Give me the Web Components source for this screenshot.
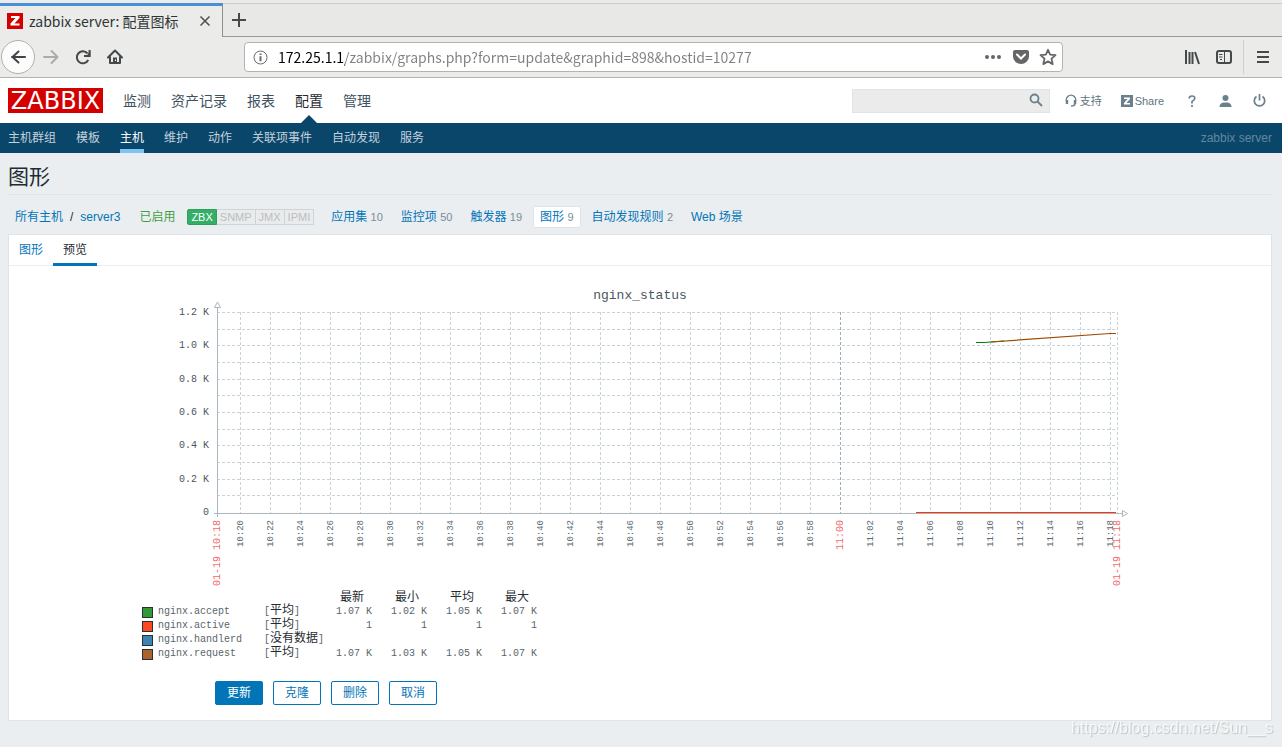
<!DOCTYPE html>
<html lang="zh-CN">
<head>
<meta charset="utf-8">
<title>zabbix server: 配置图标</title>
<style>
  html, body { margin: 0; min-height: 100vh; }
  body {
    background: #ebeef0;
    color: #1f2c33;
    font: 12px/16px "Liberation Sans", "Noto Sans CJK SC", sans-serif;
    display: flex;
    flex-direction: column;
  }
</style>
</head>
<body>
<browser-tabs label="zabbix server: 配置图标"></browser-tabs>
<browser-toolbar address="172.25.1.1/zabbix/graphs.php?form=update&amp;graphid=898&amp;hostid=10277"></browser-toolbar>
<zbx-header>
  <zbx-menu-link>监测</zbx-menu-link>
  <zbx-menu-link>资产记录</zbx-menu-link>
  <zbx-menu-link>报表</zbx-menu-link>
  <zbx-menu-link active>配置</zbx-menu-link>
  <zbx-menu-link>管理</zbx-menu-link>
</zbx-header>
<zbx-subnav server="zabbix server">
  <zbx-sub-link>主机群组</zbx-sub-link>
  <zbx-sub-link>模板</zbx-sub-link>
  <zbx-sub-link active>主机</zbx-sub-link>
  <zbx-sub-link>维护</zbx-sub-link>
  <zbx-sub-link>动作</zbx-sub-link>
  <zbx-sub-link>关联项事件</zbx-sub-link>
  <zbx-sub-link>自动发现</zbx-sub-link>
  <zbx-sub-link>服务</zbx-sub-link>
</zbx-subnav>
<zbx-page heading="图形">
  <zbx-host-nav slot="nav">
    <zbx-host-link count="10">应用集</zbx-host-link>
    <zbx-host-link count="50">监控项</zbx-host-link>
    <zbx-host-link count="19">触发器</zbx-host-link>
    <zbx-host-link count="9" active>图形</zbx-host-link>
    <zbx-host-link count="2">自动发现规则</zbx-host-link>
    <zbx-host-link>Web 场景</zbx-host-link>
  </zbx-host-nav>
  <zbx-panel>
    <zbx-tab slot="tabs">图形</zbx-tab>
    <zbx-tab slot="tabs" active>预览</zbx-tab>
    <zbx-graph></zbx-graph>
    <zbx-button slot="actions" primary>更新</zbx-button>
    <zbx-button slot="actions">克隆</zbx-button>
    <zbx-button slot="actions">删除</zbx-button>
    <zbx-button slot="actions">取消</zbx-button>
  </zbx-panel>
</zbx-page>
<page-watermark>https://blog.csdn.net/Sun__s</page-watermark>

<script>
const define = (name, render) => customElements.define(name, class extends HTMLElement {
  connectedCallback() {
    if (this.shadowRoot) return;
    this.attachShadow({ mode: "open" }).innerHTML =
      "<style>*{box-sizing:border-box}a{color:inherit;text-decoration:none}button{font:inherit;margin:0;padding:0;border:0;background:none;color:inherit}svg{display:block}</style>" + render(this);
  }
});
const esc = s => s.replace(/&/g, "&amp;").replace(/"/g, "&quot;");

define("browser-tabs", el => `
<style>
  :host { display: flex; height: 37px; box-sizing: border-box; background: #e8e8e7; border-top: 3px solid #ebebea; color: #2e3436;
    font: 14px/20px "Noto Sans CJK SC", sans-serif; }
  .tab { width: 223px; display: flex; align-items: center; background: #ebebe9; border-top: 3px solid #4a90d9; border-right: 1px solid #8e8e8b; padding: 0 10px 2px 7px; }
  .tab span { flex: 1; padding-left: 6px; white-space: nowrap; }
  .rest { flex: 1; border-top: 1px solid #cdcdcb; border-bottom: 1px solid #999996; padding: 8px; }
</style>
<div class="tab">
  <svg width="16" height="16"><rect width="16" height="16" fill="#d40000"/><path d="M4 3h8.500v2L7.500 10.500h5v2H3.500v-2l5-5.500H4z" fill="#fff"/></svg>
  <span>${el.getAttribute("label")}</span>
  <button aria-label="关闭"><svg width="14" height="14"><path d="M2.500 2.500l9 9M11.500 2.500l-9 9" stroke="#4a4f51" stroke-width="1.500"/></svg></button>
</div>
<div class="rest"><button aria-label="新标签页"><svg width="16" height="16"><path d="M8 1v14M1 8h14" stroke="#46494a" stroke-width="2"/></svg></button></div>`);

define("browser-toolbar", el => `
<style>
  :host { display: flex; align-items: center; height: 41px; box-sizing: border-box; background: #ebebe9; border-bottom: 1px solid #b3b3af; padding: 0 13px 0 1px; }
  .nav { display: flex; align-items: center; flex: none; width: 243px; }
  .nav .back { width: 34px; height: 34px; border: 1px solid #b0b0ac; border-radius: 17px; background: #fcfcfc; padding: 8px; margin-right: 8px; }
  .nav .gap + .gap { margin-left: 16px; }
  .url { flex: 1; max-width: 819px; height: 30px; display: flex; align-items: center; gap: 10px; background: #fff; border: 1px solid #b3b3af; border-radius: 4px; padding: 0 5px 0 8px; }
  .url .more { margin-right: 2px; }
  input { flex: 1; min-width: 0; border: 0; padding: 0; outline: 0; height: 26px; font: 14px/26px "Noto Sans CJK SC", sans-serif;
    color: transparent; background: linear-gradient(90deg, #000 67px, #808080 67px); -webkit-background-clip: text; background-clip: text; }
  .end { margin-left: auto; display: flex; align-items: center; gap: 16px; }
  .menu { border-left: 1px solid #cfcfcc; height: 34px; padding-left: 13px; margin-left: -5px; }
</style>
<div class="nav">
  <button class="back" aria-label="后退"><svg width="16" height="16"><path d="M2 8h13M8.500 2.500L2.500 8l6 5.500" fill="none" stroke="#3e4345" stroke-width="2" stroke-linecap="round" stroke-linejoin="round"/></svg></button>
  <button class="gap" aria-label="前进"><svg width="16" height="16"><path d="M1 8h13M8.500 2l6 6-6 6" fill="none" stroke="#acacaa" stroke-width="2" stroke-linecap="round" stroke-linejoin="round"/></svg></button>
  <button class="gap" aria-label="刷新"><svg width="16" height="16"><path d="M13.200 11A6 6 0 1 1 12.500 4.500" fill="none" stroke="#46494a" stroke-width="2"/><path d="M15.500 1v7H9V6.500h3z" fill="#46494a"/><path d="M14.500 1v6H9" fill="none" stroke="#46494a" stroke-width="1.800"/></svg></button>
  <button class="gap" aria-label="主页"><svg width="16" height="16"><path d="M1 8.500L8 1.500l7 7M3 7.500V14h10V7.500" fill="none" stroke="#46494a" stroke-width="2" stroke-linecap="round" stroke-linejoin="round"/><path d="M6 8.500h4V14H6z" fill="#46494a"/><path d="M8 10.500h1v1.500H8z" fill="#fff"/></svg></button>
</div>
<div class="url">
  <svg width="15" height="15"><circle cx="7.500" cy="7.500" r="6.500" fill="none" stroke="#6b6b6b"/><path d="M6.500 3.500h2v1.600h-2zM6.500 6.300h2v5h-2z" fill="#6b6b6b"/></svg>
  <input aria-label="地址" value="${esc(el.getAttribute("address"))}">
  <svg class="more" width="16" height="16" fill="#666"><circle cx="2" cy="8" r="2"/><circle cx="8" cy="8" r="2"/><circle cx="14" cy="8" r="2"/></svg>
  <svg width="16" height="16"><path d="M2 1h12a2 2 0 0 1 2 2v4.500a8 7.500 0 0 1-16 0V3a2 2 0 0 1 2-2z" fill="#666"/><path d="M4 5.500l4 4 4-4" fill="none" stroke="#fff" stroke-width="2" stroke-linecap="round"/></svg>
  <svg width="18" height="18"><path d="M9 1.800l2.200 4.800 5.300.5-4 3.600 1.200 5.400L9 13.400 4.300 16.100l1.200-5.400-4-3.600 5.300-.5z" fill="none" stroke="#666" stroke-width="1.800" stroke-linejoin="round"/></svg>
</div>
<div class="end">
  <button aria-label="书库"><svg width="16" height="16"><path d="M2 1v14M5.500 3v12M8.500 3v12M11 3l4 12" fill="none" stroke="#46494a" stroke-width="2"/></svg></button>
  <button aria-label="侧栏"><svg width="16" height="16"><rect x="1" y="2" width="14" height="12" rx="2" fill="none" stroke="#46494a" stroke-width="2"/><path d="M8.500 2v12M3 5.500h3.500M3 8h3.500M4 10.500h2" stroke="#46494a" fill="none"/></svg></button>
  <button class="menu" aria-label="菜单"><svg width="12" height="14"><path d="M0 2h12M0 7h12M0 12h12" stroke="#46494a" stroke-width="2"/></svg></button>
</div>`);

define("zbx-header", () => `
<style>
  :host { display: flex; align-items: center; height: 45px; padding: 0 16px 0 8px; box-sizing: border-box; background: #fff; color: #5f7580; }
  .logo { background: #d40000; color: #fff; width: 95px; height: 25px; font: 24px/26px "DejaVu Sans", sans-serif; text-align: center; }
  nav { display: flex; gap: 20px; margin-left: 20px; flex: 1; align-self: stretch; }
  form { display: flex; width: 198px; height: 24px; background: #ebebeb; border: 1px solid #dfe4e7; margin: 0; }
  input { flex: 1; min-width: 0; border: 0; background: none; outline: 0; padding: 0 4px; }
  form button { width: 24px; padding: 0 6px 2px 4px; }
  .tools { display: flex; align-items: center; margin-left: 15px; font-size: 11px; }
  .tools a { display: flex; align-items: center; gap: 3px; }
  .share { margin: 0 24px 0 19px; }
  .user { margin: 0 21px 0 23px; }
  .tools .share { gap: 2px; }
</style>
<a class="logo" href="#">ZABBIX</a>
<nav><slot></slot></nav>
<form><input type="search" aria-label="搜索"><button type="button" aria-label="搜索"><svg width="14" height="14" fill="none" stroke="#69808d" stroke-width="1.800"><circle cx="5.500" cy="5.500" r="4"/><path d="M8.500 8.500l4.500 4.500"/></svg></button></form>
<div class="tools">
  <a href="#"><svg width="12" height="13" fill="none" stroke="#69808d" stroke-width="1.500"><path d="M2.500 9A4.700 4.700 0 1 1 9.500 9"/><path d="M2 6v4M10 6v4" stroke-width="2.400"/><path d="M10 9.500q0 2.500-4 2.500"/></svg>支持</a>
  <a class="share" href="#"><svg width="12" height="12"><rect width="12" height="12" fill="#69808d"/><path d="M3 2.500h6v1.600L5.400 8H9v1.500H3V8l3.500-4H3z" fill="#fff"/></svg>Share</a>
  <a href="#" aria-label="帮助"><svg width="8" height="12" fill="none" stroke="#69808d" stroke-width="1.700"><path d="M1.200 3.500Q1.200 1 4 1t2.800 2.300Q6.800 5 4 6.500V8.500M4 10v2"/></svg></a>
  <a class="user" href="#" aria-label="用户"><svg width="13" height="12" fill="#69808d"><circle cx="6.500" cy="3" r="3"/><path d="M.5 12q0-4 4-4.500h4q4 .5 4 4.500z"/></svg></a>
  <a href="#" aria-label="退出"><svg width="13" height="13" fill="none" stroke="#69808d" stroke-width="1.700"><path d="M3.500 2.500a5.200 5.200 0 1 0 6 0M6.500 0v6.500"/></svg></a>
</div>`);

define("zbx-menu-link", () => `
<style>
  :host { display: flex; flex-direction: column; justify-content: center; position: relative; font-size: 14px; line-height: 20px; color: #3d525e; }
  :host([active]) { color: #1f2c33; }
  :host([active])::after { content: ""; position: absolute; bottom: 0; left: 6px; border: 8px solid transparent; border-top: 0; border-bottom-color: #0a466a; }
</style><a href="#"><slot></slot></a>`);

define("zbx-subnav", el => `
<style>
  :host { display: flex; height: 30px; box-sizing: border-box; padding: 0 10px 0 8px; background: #0a466a; color: #c2d1da; line-height: 30px; }
  nav { display: flex; gap: 20px; flex: 1; }
  span { color: #64879d; }
</style><nav><slot></slot></nav><span>${el.getAttribute("server")}</span>`);

define("zbx-sub-link", () => `
<style>
  :host { display: block; height: 30px; box-sizing: border-box; }
  :host([active]) { color: #fff; border-bottom: 4px solid #7dc4f5; }
</style><a href="#"><slot></slot></a>`);

define("zbx-page", el => `
<style>
  :host { display: block; padding: 0 10px 26px 8px; }
  h1 { margin: 0; height: 42px; font-size: 21px; font-weight: 400; line-height: 48px; border-bottom: 1px solid #dfe4e7; }
</style><h1>${el.getAttribute("heading")}</h1><slot name="nav"></slot><slot></slot>`);

define("zbx-host-nav", () => `
<style>
  :host { display: flex; align-items: center; height: 39px; padding: 5px 0 0 7px; box-sizing: border-box; color: #0275b8; }
  i { font-style: normal; color: #1f2c33; margin: 0 7px; }
  .on { color: #429e47; margin: 0 12px 0 19px; }
  .types { display: flex; font-size: 11px; line-height: 14px; color: #b5bfc4; margin-right: 10px; }
  .types span { border: 1px solid #ccd5d9; border-left-width: 0; background: #ebebeb; padding: 0 3px; }
  .types .ok { background: #34af67; border-color: #2f9f5e; border-left-width: 1px; color: #fff; border-radius: 2px 0 0 2px; }
  nav { display: flex; gap: 4px; }
</style>
<a href="#">所有主机</a><i>/</i><a href="#">server3</a><span class="on">已启用</span>
<div class="types"><span class="ok">ZBX</span><span>SNMP</span><span>JMX</span><span>IPMI</span></div>
<nav><slot></slot></nav>`);

define("zbx-host-link", el => `
<style>
  :host { display: block; border: 1px solid transparent; padding: 0 6px; line-height: 20px; border-radius: 2px; }
  :host([active]) { background: #fff; border-color: #dfe4e7; }
  small { font-size: 11px; color: #768d99; }
</style><a href="#"><slot></slot></a>${el.hasAttribute("count") ? ` <small>${el.getAttribute("count")}</small>` : ""}`);

define("zbx-panel", () => `
<style>
  :host { display: block; background: #fff; border: 1px solid #dfe4e7; padding-bottom: 15px; }
  .tabs { display: flex; height: 31px; border-bottom: 1px solid #ebeef0; }
  .actions { display: flex; gap: 10px; padding-left: 206px; margin-top: 20px; }
</style>
<div class="tabs"><slot name="tabs"></slot></div><slot></slot><div class="actions"><slot name="actions"></slot></div>`);

define("zbx-tab", () => `
<style>
  :host { display: block; padding: 0 10px; height: 31px; line-height: 30px; box-sizing: border-box; color: #0275b8; }
  :host([active]) { color: #1f2c33; border-bottom: 3px solid #0275b8; }
</style><a href="#"><slot></slot></a>`);

define("zbx-button", () => `
<style>
  :host { display: block; }
  button { min-width: 48px; height: 24px; padding: 0 11px; line-height: 22px; border: 1px solid #0275b8; border-radius: 2px; color: #0275b8; background: #fff; }
  :host([primary]) button { background: #0275b8; color: #fff; }
</style><button type="button"><slot></slot></button>`);

define("page-watermark", () => `
<style>
  :host { position: fixed; right: 9px; bottom: 9px; font-size: 16px; line-height: 20px; color: rgba(255,255,255,.7); text-shadow: 1px 1px 1px rgba(0,0,0,.18); }
</style><slot></slot>`);

/* Plot area: x 85..985, y 46..247 inside the figure. */
function plot() {
  const left = 85, top = 46, step = 30, bottom = 247;
  let grid = "", labels = "";
  for (let i = 0; i < 12; i++) {
    const y = top + Math.round(i * 200 / 12) + .5;
    grid += `<path d="M${left} ${y}H985"/>`;
  }
  for (let i = 0; i < 30; i++) {
    const x = left + 23 + i * step, m = 20 + i * 2;
    const hour = m % 60 === 0;
    const t = (m < 60 ? "10:" : "11:") + String(m % 60).padStart(2, "0");
    grid += `<path d="M${x + .5} ${top}V${bottom}"${hour ? ' stroke="#9aadb8"' : ""}/>`;
    labels += `<text transform="translate(${x + 3} 254) rotate(-90)" ${hour ? 'class="red"' : 'class="min"'}>${t}</text>`;
  }
  grid += `<path d="M985.500 ${top}V${bottom}"/>`;
  ["1.2 K", "1.0 K", "0.8 K", "0.6 K", "0.4 K", "0.2 K", "0"].forEach((t, i) => {
    labels += `<text x="77" y="${49 + Math.round(i * 100 / 3)}">${t}</text>`;
  });
  labels += `<text class="red" transform="translate(88 254) rotate(-90)">01-19 10:18</text><text class="red" transform="translate(988 254) rotate(-90)">01-19 11:18</text>`;
  return `<svg viewBox="0 0 1016 322" width="1016" height="322" role="img" aria-label="nginx_status">
    <text class="title" x="508" y="33">nginx_status</text>
    <g stroke="#c9d4da" stroke-dasharray="3 2" fill="none">${grid}</g>
    <g stroke="#aab7bf" fill="#fff"><path d="M85.500 42V251M82 247.500H991"/><path d="M82.500 41.500h6l-3-5.500zM990.500 244.500v6l5-3z"/></g>
    ${labels}
    <path d="M844 76.500H852L872 75" stroke="#008000" fill="none"/><path d="M859 76L978 67.500H984" stroke="#a04a00" fill="none" stroke-width="1.200"/>
    <path d="M784 246.500H984" stroke="#ff3300"/>
  </svg>`;
}
const rows = [
  ["#339933", "nginx.accept", "平均", "1.07 K", "1.02 K", "1.05 K", "1.07 K"],
  ["#ff4a1f", "nginx.active", "平均", "1", "1", "1", "1"],
  ["#3f83b0", "nginx.handlerd", "没有数据", "", "", "", ""],
  ["#ac622a", "nginx.request", "平均", "1.07 K", "1.03 K", "1.05 K", "1.07 K"]
];
define("zbx-graph", () => `
<style>
  :host { display: block; width: 1016px; max-width: 100%; margin: 0 auto; font: 10px/14px "Liberation Mono", "Noto Sans CJK SC", monospace; color: #59656b; }
  svg { max-width: 100%; }
  text { font-size: 10px; fill: #4a565c; text-anchor: end; }
  .title { font-size: 13px; text-anchor: middle; }
  .min { font-size: 9px; fill: #5c686e; }
  .red { fill: #f06a6a; }
  table { border-collapse: collapse; margin-left: 10px; table-layout: fixed; width: 395px; margin-top: 3px; }
  td, th { padding: 0; height: 14px; text-align: right; font-weight: 400; white-space: pre; }
  th { font-size: 12px; padding-right: 8px; color: #1f2c33; }
  td:nth-child(2), td:nth-child(3) { text-align: left; }
  b { font-weight: 400; font-size: 12px; line-height: 0; color: #1f2c33; }
  i { display: block; width: 11px; height: 11px; border: 1px solid #26323a; }
</style>
${plot()}
<table>
  <colgroup><col style="width:16px"><col style="width:106px"><col style="width:53px"><col style="width:55px"><col style="width:55px"><col style="width:55px"><col style="width:55px"></colgroup>
  <thead><tr><th></th><th></th><th></th><th>最新</th><th>最小</th><th>平均</th><th>最大</th></tr></thead>
  <tbody>${rows.map(r => `<tr><td><i style="background:${r[0]}"></i></td><td>${r[1]}</td><td>[<b>${r[2]}</b>]</td>${r.slice(3).map(v => `<td>${v}</td>`).join("")}</tr>`).join("")}</tbody>
</table>`);
</script>
</body>
</html>
